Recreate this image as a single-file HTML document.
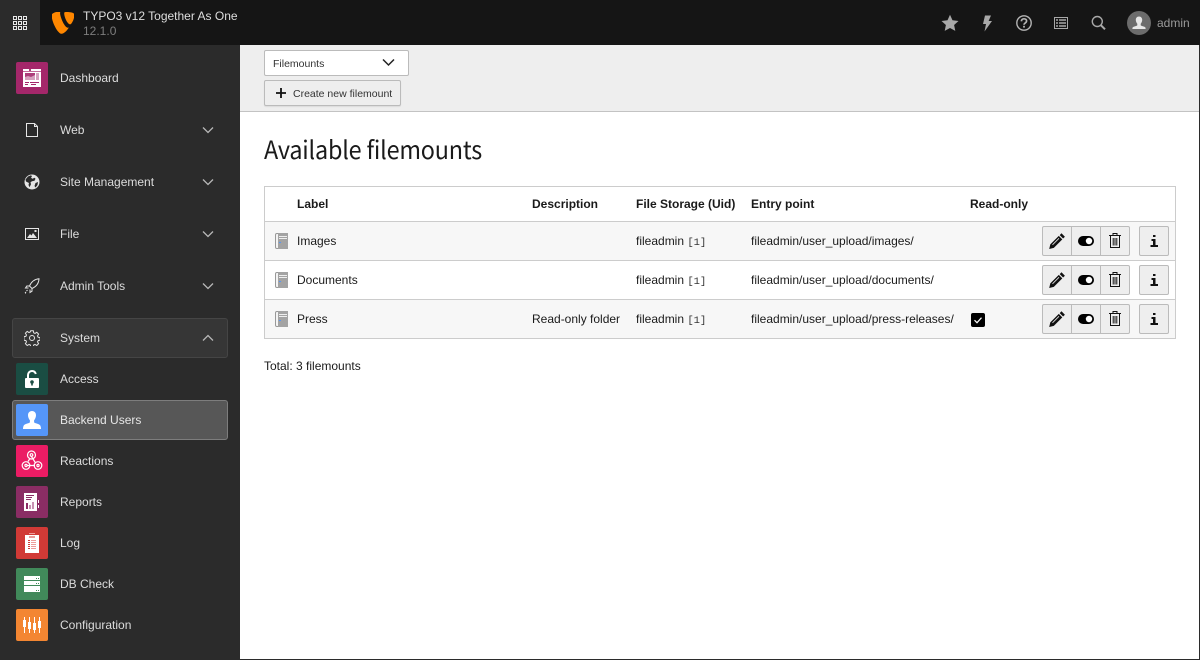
<!DOCTYPE html>
<html><head><meta charset="utf-8"><title>Filemounts</title>
<style>
*{box-sizing:border-box}
html,body{margin:0;padding:0;width:1200px;height:660px;overflow:hidden;background:#2b2b2b;font:12px/14px "Liberation Sans",sans-serif;color:#000}
.a{position:absolute}
.t{position:absolute;white-space:nowrap;line-height:14px}
#top{left:0;top:0;width:1200px;height:45px;background:#151515}
#grid{left:0;top:0;width:40px;height:45px;background:#2b2b2b}
#side{left:0;top:45px;width:240px;height:615px;background:#2b2b2b}
.m{position:absolute;left:60px;color:#dcdcdc;white-space:nowrap;line-height:14px}
.ic{position:absolute;left:16px;width:32px;height:32px;border-radius:2px}
svg{position:absolute;display:block}
#main{left:240px;top:45px;width:959px;height:614px;background:#fff}
#dh{left:0;top:0;width:959px;height:67px;background:#eee;border-bottom:1px solid #c3c3c3}
.btn{position:absolute;background:#eee;border:1px solid #bbb;height:30px;width:30px}
.row{position:absolute;left:265px;width:910px;height:39px;border-bottom:1px solid #ccc}
.c{position:absolute;white-space:nowrap;line-height:14px;color:#1a1a1a}
.mono{font:10.5px "Liberation Mono",monospace;color:#333}
.h{font-weight:bold;color:#1a1a1a}
</style></head><body>
<div class="a" id="side"></div>
<div class="a" id="top"></div>
<div class="a" id="grid"></div>
<svg style="left:13px;top:16px" width="14" height="14" viewBox="0 0 14 14" fill="none" stroke="#e8e8e8" stroke-width="1"><path d="M.5.5h3v3h-3zM5.500.5h3v3h-3zM10.500.5h3v3h-3zM.5 5.500h3v3h-3zM5.500 5.500h3v3h-3zM10.500 5.500h3v3h-3zM.5 10.500h3v3h-3zM5.500 10.500h3v3h-3zM10.500 10.500h3v3h-3z"/></svg>
<svg style="left:52px;top:12px" width="22" height="23" viewBox="0 0 22 23"><path fill="#ff8700" d="M16.800 15.500c-.4.100-.7.200-1.100.2-3.100 0-7.600-10.800-7.600-14.400 0-1.300.3-1.800.8-2.100C5 -.4 1.100.6 0 2.200c-.300.400-.3 1-.3 1.700 0 5.500 5.900 17.900 10 17.900 2 0 5.300-3 7.100-6.300zM14.900 0c3.700 0 7.500.6 7.500 2.800 0 4.300-2.800 9.600-4.300 9.600-2.600 0-5.900-7.400-5.900-11C12.200.2 12.700 0 14.900 0z"/></svg>
<div class="t" style="left:83px;top:9px;color:#dedede">TYPO3 v12 Together As One</div>
<div class="t" style="left:83px;top:24px;color:#7d7d7d">12.1.0</div>

<!-- top icons -->
<svg style="left:941px;top:14px" width="18" height="18" viewBox="0 0 18 18"><path fill="#a8a8a8" d="M9 .8l2.500 5.500 6 .7-4.400 4 1.200 5.900L9 14l-5.300 2.900 1.200-5.900L.5 7l6-.7z"/></svg>
<svg style="left:982px;top:15px" width="10" height="17" viewBox="0 0 10 17"><path fill="#a8a8a8" d="M3 .5h6L6.600 6H10L2.500 16.500 4 9H1z"/></svg>
<svg style="left:1016px;top:15px" width="16" height="16" viewBox="0 0 16 16"><circle cx="8" cy="8" r="7.200" fill="none" stroke="#b4b4b4" stroke-width="1.400"/><path d="M5.400 6.300C5.500 4.700 6.600 3.800 8 3.800c1.600 0 2.600.9 2.600 2.200 0 1.900-2.600 1.900-2.600 3.800" fill="none" stroke="#b4b4b4" stroke-width="1.700"/><rect x="7.100" y="10.800" width="1.800" height="1.800" fill="#b4b4b4"/></svg>
<svg style="left:1054px;top:17px" width="14" height="12" viewBox="0 0 14 12"><rect x=".5" y=".5" width="13" height="11" fill="none" stroke="#a8a8a8"/><path stroke="#a8a8a8" stroke-width="1.500" d="M2 3h2M5 3h7M2 6h2M5 6h7M2 9h2M5 9h7"/></svg>
<svg style="left:1091px;top:15px" width="15" height="16" viewBox="0 0 15 16" fill="none" stroke="#a8a8a8" stroke-width="1.400"><circle cx="6.300" cy="6.500" r="5"/><path d="M10 10.300l4 4" stroke-width="2"/></svg>
<svg style="left:1127px;top:11px" width="24" height="24" viewBox="0 0 24 24"><circle cx="12" cy="12" r="12" fill="#6c6c6c"/><path fill="#e8e8e8" d="M12 5.500c2 0 3.200 1.400 3.200 3.400 0 1.500-.7 3-1.500 3.800v1.500c0 .6 3.900 1.200 4.600 2.200.3.500.3 1.400.3 1.600H5.400c0-.2 0-1.100.3-1.600.7-1 4.600-1.600 4.600-2.200v-1.500c-.8-.8-1.500-2.300-1.500-3.800 0-2 1.200-3.400 3.200-3.400z"/></svg>
<div class="t" style="left:1157px;top:16px;color:#9a9a9a">admin</div>

<!-- sidebar -->
<div class="ic" style="top:62px;background:#a4276a"></div>
<svg style="left:23px;top:69px" width="18" height="18" viewBox="0 0 18 18"><rect width="18" height="18" fill="#fff"/><path fill="#a4276a" d="M0 2h6V0h2v2h10v.8H0zM2 4h10v7H2z" opacity=".9"/><path fill="#d6a0bd" d="M2 8l3-1 3 1 4-2v5H2zM13 4h3v7h-3z"/><path fill="#a4276a" d="M2 13h4v1H2zM2 15h3v1H2zM7 13h9v1H7zM8 15h5v1H8z"/></svg>
<div class="m" style="top:71px">Dashboard</div>

<svg style="left:26px;top:123px" width="12" height="14" viewBox="0 0 12 14"><path d="M.5.500h8l3 3v10H.5z" fill="none" stroke="#e6e6e6"/><path d="M8.500.500v3h3" fill="none" stroke="#e6e6e6"/></svg>
<div class="m" style="top:123px">Web</div>
<svg style="left:24px;top:174px" width="16" height="16" viewBox="0 0 16 16"><circle cx="8" cy="8" r="7.500" fill="#e6e6e6"/><path fill="#2b2b2b" d="M4 2.500l3-1.200 1 1-1 1.500 1.500 1 2-1 1 1-1 2-2.500.5-1.500 1 .5 2-1.500 3L4.500 11 5 9 2 7.500 1.500 5.500zM11.500 9l2.500-1-.5 3-2 2.500-1-1.500z"/></svg>
<div class="m" style="top:175px">Site Management</div>
<svg style="left:25px;top:228px" width="14" height="12" viewBox="0 0 14 12"><rect x=".5" y=".5" width="13" height="11" fill="#2b2b2b" stroke="#e6e6e6"/><path fill="#e6e6e6" d="M2 10l3-4 1.500 1.500L8 5l4 5z"/><rect x="9.500" y="2" width="2" height="2" fill="#e6e6e6"/></svg>
<div class="m" style="top:227px">File</div>
<svg style="left:24px;top:278px" width="16" height="16" viewBox="0 0 16 16" fill="none" stroke="#e6e6e6" stroke-width="1"><path d="M15 .8C11 1.200 7.500 3.500 5.500 8L8 10.500C12.500 8.500 14.800 5 15 .8zM5.500 8H2.800L1.500 10h3M8 10.500v2.700l-2 1.300v-3M3.500 12l-1 1M1 15h1M1 14l1 1"/></svg>
<div class="m" style="top:279px">Admin Tools</div>
<svg style="left:202px;top:126px" width="12" height="8" viewBox="0 0 12 8"><path d="M1 1.500l5 5 5-5" fill="none" stroke="#b8b8b8" stroke-width="1.300"/></svg>
<svg style="left:202px;top:178px" width="12" height="8" viewBox="0 0 12 8"><path d="M1 1.500l5 5 5-5" fill="none" stroke="#b8b8b8" stroke-width="1.300"/></svg>
<svg style="left:202px;top:230px" width="12" height="8" viewBox="0 0 12 8"><path d="M1 1.500l5 5 5-5" fill="none" stroke="#b8b8b8" stroke-width="1.300"/></svg>
<svg style="left:202px;top:282px" width="12" height="8" viewBox="0 0 12 8"><path d="M1 1.500l5 5 5-5" fill="none" stroke="#b8b8b8" stroke-width="1.300"/></svg>

<div class="a" style="left:12px;top:318px;width:216px;height:40px;background:#363636;border:1px solid #454545;border-radius:3px"></div>
<svg style="left:24px;top:330px" width="16" height="16" viewBox="0 0 16 16" fill="none" stroke="#e6e6e6" stroke-width="1"><path d="M6.700.800h2.600l.4 2 1.300.6 1.800-1.100 1.800 1.800-1.100 1.800.6 1.300 2 .4v2.600l-2 .4-.6 1.300 1.100 1.800-1.800 1.800-1.800-1.100-1.300.6-.4 2H6.700l-.4-2-1.300-.6-1.800 1.100-1.800-1.800 1.100-1.800-.6-1.300-2-.4V6.700l2-.4.600-1.300-1.100-1.800 1.800-1.800 1.800 1.100 1.300-.6z"/><circle cx="8" cy="8" r="2.500"/></svg>
<div class="m" style="top:331px">System</div>
<svg style="left:202px;top:334px" width="12" height="8" viewBox="0 0 12 8"><path d="M1 6.500l5-5 5 5" fill="none" stroke="#b8b8b8" stroke-width="1.300"/></svg>

<div class="ic" style="top:363px;background:#1a4d43"></div>
<svg style="left:25px;top:370px" width="14" height="18" viewBox="0 0 14 18"><path fill="none" stroke="#fff" stroke-width="2" d="M3 8V5c0-2.200 1.700-4 4-4 2 0 3.300 1.200 3.800 3"/><rect y="8" width="14" height="10" rx="1" fill="#fff"/><circle cx="7" cy="12" r="1.800" fill="#1a4d43"/><rect x="6.200" y="12" width="1.600" height="3.500" fill="#1a4d43"/></svg>
<div class="m" style="top:372px">Access</div>

<div class="a" style="left:12px;top:400px;width:216px;height:40px;background:#575757;border:1px solid #7d7d7d;border-radius:3px"></div>
<div class="ic" style="top:404px;background:#5596f8"></div>
<svg style="left:23px;top:411px" width="18" height="18" viewBox="0 0 18 18"><path fill="#fff" d="M9 0c2.600 0 4 1.800 4 4.200 0 2-1 4-1.900 5v2c0 .9 4.900 1.500 6 3 .7 1 .9 2.800.9 3.800H0c0-1 .2-2.800.9-3.800 1.100-1.500 6-2.100 6-3v-2C6 8.200 5 6.200 5 4.200 5 1.800 6.400 0 9 0z"/></svg>
<div class="m" style="top:413px;color:#e6e6e6">Backend Users</div>

<div class="ic" style="top:445px;background:#eb1c64"></div>
<svg style="left:21px;top:450px" width="22" height="22" viewBox="0 0 22 22" fill="none" stroke="#fff" stroke-width="1.200"><circle cx="10.500" cy="5" r="4"/><circle cx="10.500" cy="5" r="1.300"/><circle cx="5" cy="15.500" r="3.800"/><circle cx="5" cy="15.500" r="1.100"/><circle cx="17" cy="15.500" r="3.800"/><circle cx="17" cy="15.500" r="1.100"/><path d="M10.500 6.500l4 6.500M7 11.500L9 8.500M6 15.500h8"/></svg>
<div class="m" style="top:454px">Reactions</div>

<div class="ic" style="top:486px;background:#8a2d64"></div>
<svg style="left:24px;top:493px" width="16" height="18" viewBox="0 0 16 18"><rect width="13" height="18" fill="#fff"/><path fill="#8a2d64" d="M2 2h8v1H2zM2 4h6v1H2zM2 6h5v1H2zM2 10h2v6H2z"/><path fill="#c893b3" d="M5 12h2v4H5zM8 9h2v7H8z"/><path fill="#fff" d="M14 7h1v3h-1zM14 12h1v3h-1z"/></svg>
<div class="m" style="top:495px">Reports</div>

<div class="ic" style="top:527px;background:#d13a36"></div>
<svg style="left:25px;top:533px" width="14" height="20" viewBox="0 0 14 20"><rect y="2" width="14" height="18" fill="#fff"/><rect x="4" y="0" width="6" height="1" fill="#ee9c99"/><path fill="#d13a36" d="M4 3.500h6v1H4zM3 7h2v1H3zM3 9h2v1H3zM3 11h2v1H3zM3 13h2v1H3zM3 15h2v1H3z"/><path fill="#ee9c99" d="M6 7h5v1H6zM6 9h5v1H6zM6 11h5v1H6zM6 13h5v1H6zM6 15h5v1H6z"/></svg>
<div class="m" style="top:536px">Log</div>

<div class="ic" style="top:568px;background:#41895a"></div>
<svg style="left:24px;top:576px" width="16" height="16" viewBox="0 0 16 16"><path fill="#fff" d="M0 0h16v4H0zM0 5h16v4H0zM0 10h16v6H0z"/><path fill="#41895a" d="M12 2h1v1h-1zM14 2h1v1h-1zM12 7h1v1h-1zM14 7h1v1h-1zM12 14h1v1h-1zM14 14h1v1h-1z"/></svg>
<div class="m" style="top:577px">DB Check</div>

<div class="ic" style="top:609px;background:#f38632"></div>
<svg style="left:23px;top:617px" width="18" height="16" viewBox="0 0 18 16"><path fill="#fff" d="M0 3h3v7H0zM5 5h3v7H5zM10 6h3v7h-3zM15 4h3v7h-3z"/><path stroke="#fff" d="M1.500 0v16M6.500 0v16M11.500 0v16M16.500 0v16"/></svg>
<div class="m" style="top:618px">Configuration</div>

<!-- main -->
<div class="a" id="main"><div class="a" id="dh"></div></div>
<div class="a" style="left:264px;top:50px;width:145px;height:26px;background:#fff;border:1px solid #bbb;border-radius:2px"></div>
<div class="t" style="left:273px;top:57px;font-size:10.5px;color:#333">Filemounts</div>
<svg style="left:382px;top:58px" width="13" height="9" viewBox="0 0 13 9"><path d="M1 1.500l5.500 5.500L12 1.500" fill="none" stroke="#222" stroke-width="1.500"/></svg>
<div class="a" style="left:264px;top:80px;width:137px;height:26px;background:#eee;border:1px solid #bbb;border-radius:2px;box-shadow:0 1px 1px rgba(0,0,0,.08)"></div>
<svg style="left:276px;top:88px" width="10" height="10" viewBox="0 0 10 10"><path d="M5 0v10M0 5h10" stroke="#111" stroke-width="1.800"/></svg>
<div class="t" style="left:293px;top:87px;font-size:10.5px;color:#333">Create new filemount</div>
<div class="t" style="left:264px;top:132px;font:25px/34px 'Noto Sans CJK JP','Liberation Sans',sans-serif;color:#1a1a1a;letter-spacing:-.2px;transform:scaleX(.935);transform-origin:0 50%">Available filemounts</div>

<!-- table -->
<div class="a" style="left:264px;top:186px;width:912px;height:153px;border:1px solid #ccc;background:#fff"></div>
<div class="a" style="left:265px;top:221px;width:910px;height:1px;background:#ccc"></div>
<div class="row" style="top:222px;background:#f7f7f7"></div>
<div class="row" style="top:261px;background:#fff"></div>
<div class="row" style="top:300px;background:#f7f7f7"></div>

<div class="c h" style="left:297px;top:197px">Label</div>
<div class="c h" style="left:532px;top:197px">Description</div>
<div class="c h" style="left:636px;top:197px">File Storage (Uid)</div>
<div class="c h" style="left:751px;top:197px">Entry point</div>
<div class="c h" style="left:970px;top:197px">Read-only</div>

<svg style="left:275px;top:233px" width="13" height="16" viewBox="0 0 13 16"><path d="M3 .5H1.800C.9.500.5 1.200.5 2v12c0 .8.400 1.500 1.300 1.500H3" fill="#f4f4f4" stroke="#999"/><rect x="3" width="10" height="16" fill="#a3a3a3"/><path fill="#eee" d="M4 3h8v1H4zM4 5h8v1H4z"/><rect x="4" y="9" width="2" height="1" fill="#5596f8"/></svg>
<svg style="left:275px;top:272px" width="13" height="16" viewBox="0 0 13 16"><path d="M3 .5H1.800C.9.500.5 1.200.5 2v12c0 .8.400 1.500 1.300 1.500H3" fill="#f4f4f4" stroke="#999"/><rect x="3" width="10" height="16" fill="#a3a3a3"/><path fill="#eee" d="M4 3h8v1H4zM4 5h8v1H4z"/><rect x="4" y="9" width="2" height="1" fill="#5596f8"/></svg>
<svg style="left:275px;top:311px" width="13" height="16" viewBox="0 0 13 16"><path d="M3 .5H1.800C.9.500.5 1.200.5 2v12c0 .8.400 1.500 1.300 1.500H3" fill="#f4f4f4" stroke="#999"/><rect x="3" width="10" height="16" fill="#a3a3a3"/><path fill="#eee" d="M4 3h8v1H4zM4 5h8v1H4z"/><rect x="4" y="9" width="2" height="1" fill="#5596f8"/></svg>

<div class="c" style="left:297px;top:234px">Images</div>
<div class="c" style="left:636px;top:234px">fileadmin <span class="mono">[1]</span></div>
<div class="c" style="left:751px;top:234px">fileadmin/user_upload/images/</div>
<div class="c" style="left:297px;top:273px">Documents</div>
<div class="c" style="left:636px;top:273px">fileadmin <span class="mono">[1]</span></div>
<div class="c" style="left:751px;top:273px">fileadmin/user_upload/documents/</div>
<div class="c" style="left:297px;top:312px">Press</div>
<div class="c" style="left:532px;top:312px">Read-only folder</div>
<div class="c" style="left:636px;top:312px">fileadmin <span class="mono">[1]</span></div>
<div class="c" style="left:751px;top:312px">fileadmin/user_upload/press-releases/</div>

<svg style="left:971px;top:313px" width="14" height="14" viewBox="0 0 14 14"><rect width="14" height="14" rx="2" fill="#000"/><path d="M3.500 7.200l2.500 2.500 4.500-5" fill="none" stroke="#fff" stroke-width="1.200"/></svg>

<!-- Row 1 buttons -->
<div class="btn" style="left:1042px;top:226px;border-radius:2px 0 0 2px"></div><div class="btn" style="left:1071px;top:226px"></div><div class="btn" style="left:1100px;top:226px;border-radius:0 2px 2px 0"></div><div class="btn" style="left:1139px;top:226px;border-radius:2px"></div>
<svg style="left:1049px;top:233px" width="16" height="16" viewBox="0 0 16 16"><path fill="#111" d="M12.500.3l3.400 3.400-1.800 1.800-3.400-3.400zM9.800 2.900l3.500 3.500-8.500 8.500-4.600 1.100 1.100-4.600z"/><path stroke="#eee" stroke-width=".8" d="M3.500 11.800l6.500-6.500"/></svg>
<svg style="left:1078px;top:236px" width="16" height="10" viewBox="0 0 16 10"><rect width="16" height="10" rx="5" fill="#000"/><circle cx="11" cy="5" r="3.200" fill="#fff"/></svg>
<svg style="left:1109px;top:233px" width="12" height="15" viewBox="0 0 12 15" fill="none" stroke="#111"><path d="M0 2.500h12M4 2.500V.5h4v2M1.500 2.500v12h9v-12M4.200 5v7.500M6 5v7.500M7.800 5v7.500"/></svg>
<svg style="left:1150px;top:235px" width="8" height="12" viewBox="0 0 8 12"><path fill="#111" d="M3 0h2.500v2H3zM1.500 4h4v6H8v2H.5v-2H3V6H1.500z"/></svg>
<!-- Row 2 buttons -->
<div class="btn" style="left:1042px;top:265px;border-radius:2px 0 0 2px"></div><div class="btn" style="left:1071px;top:265px"></div><div class="btn" style="left:1100px;top:265px;border-radius:0 2px 2px 0"></div><div class="btn" style="left:1139px;top:265px;border-radius:2px"></div>
<svg style="left:1049px;top:272px" width="16" height="16" viewBox="0 0 16 16"><path fill="#111" d="M12.500.3l3.400 3.400-1.800 1.800-3.400-3.400zM9.800 2.900l3.500 3.500-8.500 8.500-4.600 1.100 1.100-4.600z"/><path stroke="#eee" stroke-width=".8" d="M3.500 11.800l6.500-6.500"/></svg>
<svg style="left:1078px;top:275px" width="16" height="10" viewBox="0 0 16 10"><rect width="16" height="10" rx="5" fill="#000"/><circle cx="11" cy="5" r="3.200" fill="#fff"/></svg>
<svg style="left:1109px;top:272px" width="12" height="15" viewBox="0 0 12 15" fill="none" stroke="#111"><path d="M0 2.500h12M4 2.500V.5h4v2M1.500 2.500v12h9v-12M4.200 5v7.500M6 5v7.500M7.800 5v7.500"/></svg>
<svg style="left:1150px;top:274px" width="8" height="12" viewBox="0 0 8 12"><path fill="#111" d="M3 0h2.500v2H3zM1.500 4h4v6H8v2H.5v-2H3V6H1.500z"/></svg>
<!-- Row 3 buttons -->
<div class="btn" style="left:1042px;top:304px;border-radius:2px 0 0 2px"></div><div class="btn" style="left:1071px;top:304px"></div><div class="btn" style="left:1100px;top:304px;border-radius:0 2px 2px 0"></div><div class="btn" style="left:1139px;top:304px;border-radius:2px"></div>
<svg style="left:1049px;top:311px" width="16" height="16" viewBox="0 0 16 16"><path fill="#111" d="M12.500.3l3.400 3.400-1.800 1.800-3.400-3.400zM9.800 2.900l3.500 3.500-8.500 8.500-4.600 1.100 1.100-4.600z"/><path stroke="#eee" stroke-width=".8" d="M3.500 11.800l6.500-6.500"/></svg>
<svg style="left:1078px;top:314px" width="16" height="10" viewBox="0 0 16 10"><rect width="16" height="10" rx="5" fill="#000"/><circle cx="11" cy="5" r="3.200" fill="#fff"/></svg>
<svg style="left:1109px;top:311px" width="12" height="15" viewBox="0 0 12 15" fill="none" stroke="#111"><path d="M0 2.500h12M4 2.500V.5h4v2M1.500 2.500v12h9v-12M4.200 5v7.500M6 5v7.500M7.800 5v7.500"/></svg>
<svg style="left:1150px;top:313px" width="8" height="12" viewBox="0 0 8 12"><path fill="#111" d="M3 0h2.500v2H3zM1.500 4h4v6H8v2H.5v-2H3V6H1.500z"/></svg>

<div class="c" style="left:264px;top:359px">Total: 3 filemounts</div>
</body></html>
